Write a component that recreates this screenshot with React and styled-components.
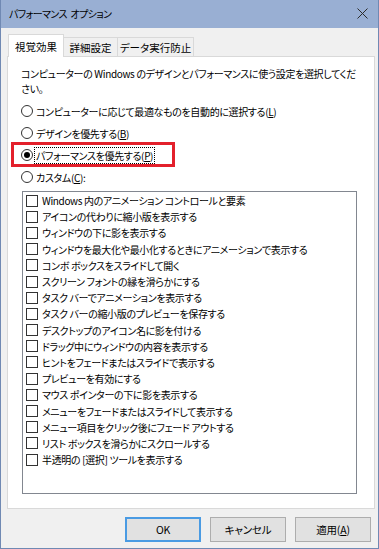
import React from "react";
import styled, { createGlobalStyle } from "styled-components";

const GlobalStyle = createGlobalStyle`
  html, body {
    margin: 0;
    padding: 0;
    background: #f0f0f0;
  }
  body {
    font-family: "Noto Sans CJK JP", "Noto Sans", sans-serif;
    font-size: 10px;
    letter-spacing: -0.35px;
    color: #000;
    font-feature-settings: "palt";
  }
`;

const Window = styled.div`
  width: 379px;
  height: 549px;
  box-sizing: border-box;
  border: 1px solid #7089b3;
  border-top: none;
  background: #f0f0f0;
  display: flex;
  flex-direction: column;
`;

const TitleBar = styled.div`
  height: 28px;
  flex: none;
  background: #99afd3;
  display: flex;
  align-items: center;
  justify-content: space-between;
  padding: 0 8px 2px 8px;
  box-sizing: border-box;
`;

const Title = styled.span`
  font-size: 10px;
  letter-spacing: -0.6px;
  word-spacing: 2px;
`;

const Body = styled.div`
  padding: 6px 3px 0 6px;
  display: flex;
  flex-direction: column;
`;

const TabRow = styled.div`
  display: flex;
  align-items: flex-end;
  padding-left: 1px;
  position: relative;
  z-index: 1;
  margin-bottom: -1px;
`;

const Tab = styled.div`
  box-sizing: border-box;
  border: 1px solid #d9d9d9;
  border-bottom: ${p => (p.$active ? "none" : "1px solid #d9d9d9")};
  background: ${p => (p.$active ? "#fff" : "#f0f0f0")};
  height: ${p => (p.$active ? "23px" : "20px")};
  width: ${p => p.$w}px;
  margin-left: ${p => (p.$active ? "0" : "-1px")};
  display: flex;
  align-items: center;
  justify-content: center;
  white-space: nowrap;
  font-size: 10.5px;
  letter-spacing: 0;
  padding-top: ${p => (p.$active ? "0" : "1px")};
`;

const Panel = styled.div`
  height: 453px;
  box-sizing: border-box;
  border: 1px solid #d9d9d9;
  background: #fff;
  padding: 9px 0 0 13px;
  display: flex;
  flex-direction: column;
`;

const Intro = styled.div`
  line-height: 15px;
  white-space: nowrap;
`;

const RadioGroup = styled.div`
  margin-top: 4px;
  display: flex;
  flex-direction: column;
`;

const RadioRow = styled.div`
  height: 22px;
  display: flex;
  align-items: center;
  position: relative;
`;

const Radio = styled.span`
  width: 12px;
  height: 12px;
  box-sizing: border-box;
  border: 1px solid #333;
  border-radius: 50%;
  margin-right: 2px;
  display: flex;
  align-items: center;
  justify-content: center;
  flex: none;

  &::after {
    content: "";
    width: 6px;
    height: 6px;
    border-radius: 50%;
    background: ${p => (p.$checked ? "#000" : "transparent")};
  }
`;

const Label = styled.span`
  line-height: 15px;
  padding: 0 1px;
  white-space: nowrap;
  outline: ${p => (p.$focus ? "1px dotted #000" : "none")};
  outline-offset: 0;
`;

const Highlight = styled.div`
  position: absolute;
  left: -10px;
  top: -2px;
  bottom: -1px;
  width: 164px;
  box-sizing: border-box;
  border: 3px solid #e3202b;
  pointer-events: none;
`;

const ListBox = styled.div`
  margin: 3px 0 0 1px;
  width: 335px;
  height: 303px;
  box-sizing: border-box;
  border: 1px solid #828790;
  padding: 0.5px 0 0 3px;
  display: flex;
  flex-direction: column;
`;

const CheckRow = styled.div`
  height: 16.2px;
  display: flex;
  align-items: center;
  white-space: nowrap;
`;

const Check = styled.span`
  width: 12px;
  height: 12px;
  box-sizing: border-box;
  border: 1px solid #333;
  background: #fff;
  margin-right: 4px;
  flex: none;
`;

const ButtonRow = styled.div`
  display: flex;
  justify-content: flex-end;
  gap: 9px;
  padding: 8px 4px 0 0;
`;

const Button = styled.div`
  width: 76px;
  height: 25px;
  box-sizing: border-box;
  background: #e1e1e1;
  border: ${p => (p.$default ? "2px solid #4a9be3" : "1px solid #adadad")};
  display: flex;
  align-items: center;
  justify-content: center;
  font-size: 10.5px;
  letter-spacing: -0.2px;
`;

const CloseIcon = () => (
  <svg width="11" height="11" viewBox="0 0 11 11" style={{ marginRight: 2 }}>
    <path d="M0.5 0.5 L10.5 10.5 M10.5 0.5 L0.5 10.5" stroke="#2b2b2b" strokeWidth="1" fill="none" />
  </svg>
);

const options = [
  "Windows 内のアニメーション コントロールと要素",
  "アイコンの代わりに縮小版を表示する",
  "ウィンドウの下に影を表示する",
  "ウィンドウを最大化や最小化するときにアニメーションで表示する",
  "コンボ ボックスをスライドして開く",
  "スクリーン フォントの縁を滑らかにする",
  "タスク バーでアニメーションを表示する",
  "タスク バーの縮小版のプレビューを保存する",
  "デスクトップのアイコン名に影を付ける",
  "ドラッグ中にウィンドウの内容を表示する",
  "ヒントをフェードまたはスライドで表示する",
  "プレビューを有効にする",
  "マウス ポインターの下に影を表示する",
  "メニューをフェードまたはスライドして表示する",
  "メニュー項目をクリック後にフェード アウトする",
  "リスト ボックスを滑らかにスクロールする",
  "半透明の [選択] ツールを表示する",
];

export default function App() {
  return (
    <>
      <GlobalStyle />
      <Window>
        <TitleBar>
          <Title>パフォーマンス オプション</Title>
          <CloseIcon />
        </TitleBar>
        <Body>
          <TabRow>
            <Tab $active $w={56}>視覚効果</Tab>
            <Tab $w={55}>詳細設定</Tab>
            <Tab $w={77}>データ実行防止</Tab>
          </TabRow>
          <Panel>
            <Intro>
              コンピューターの Windows のデザインとパフォーマンスに使う設定を選択してくだ
              <br />
              さい。
            </Intro>
            <RadioGroup>
              <RadioRow>
                <Radio />
                <Label>コンピューターに応じて最適なものを自動的に選択する(<u>L</u>)</Label>
              </RadioRow>
              <RadioRow>
                <Radio />
                <Label>デザインを優先する(<u>B</u>)</Label>
              </RadioRow>
              <RadioRow>
                <Radio $checked />
                <Label $focus>パフォーマンスを優先する(<u>P</u>)</Label>
                <Highlight />
              </RadioRow>
              <RadioRow>
                <Radio />
                <Label>カスタム(<u>C</u>):</Label>
              </RadioRow>
            </RadioGroup>
            <ListBox>
              {options.map(o => (
                <CheckRow key={o}>
                  <Check />
                  <span>{o}</span>
                </CheckRow>
              ))}
            </ListBox>
          </Panel>
          <ButtonRow>
            <Button $default>OK</Button>
            <Button>キャンセル</Button>
            <Button>適用(<u>A</u>)</Button>
          </ButtonRow>
        </Body>
      </Window>
    </>
  );
}
